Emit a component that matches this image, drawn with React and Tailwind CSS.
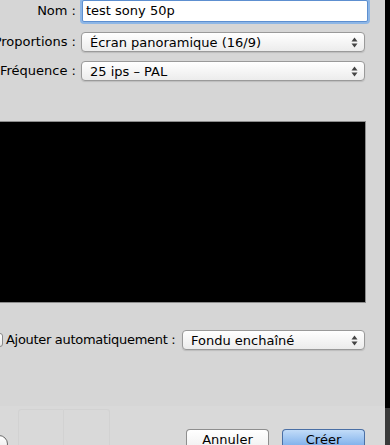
import React from "react";

const font = { fontFamily: '"DejaVu Sans", "Lucida Grande", sans-serif' };

const Arrows = () => (
  <svg width="7" height="11" viewBox="0 0 7 11" className="shrink-0">
    <path d="M3.5 0.5 L6.5 4.5 L0.5 4.5 Z" fill="#444" />
    <path d="M3.5 10.5 L6.5 6.5 L0.5 6.5 Z" fill="#444" />
  </svg>
);

const Popup = ({ value, className }) => (
  <div
    className={`flex h-[20px] shrink-0 items-center justify-between rounded-[4px] border border-[#9a9a9a] bg-gradient-to-b from-white to-[#ececec] pl-[8px] pr-[6px] text-[13px] text-black shadow-[0_1px_1px_rgba(0,0,0,0.12)] ${className}`}
  >
    <span className="leading-none">{value}</span>
    <Arrows />
  </div>
);

const Label = ({ children }) => (
  <div className="flex w-[76px] shrink-0 justify-end whitespace-nowrap text-[13px] text-black">
    {children}
  </div>
);

export default function App() {
  return (
    <div className="flex h-[445px] w-[390px] overflow-hidden bg-[#d6d6d6]" style={font}>
      {/* dialog */}
      <div className="flex w-[385px] flex-col">
        <div className="flex flex-col">
          {/* Nom */}
          <div className="-mt-[1px] flex h-[24px] items-center">
            <Label>Nom :</Label>
            <div className="ml-[6px] flex h-[22px] w-[286px] items-center rounded-[2px] border border-[#5d8fd0] bg-white pl-[3px] text-[13px] text-black shadow-[0_0_0_2px_#8db6e6]">
              test sony 50p
            </div>
          </div>

          {/* Proportions */}
          <div className="mt-[9px] flex items-center">
            <Label>Proportions :</Label>
            <Popup value="Écran panoramique (16/9)" className="ml-[5px] w-[284px]" />
          </div>

          {/* Fréquence */}
          <div className="mt-[9px] flex items-center">
            <Label>Fréquence :</Label>
            <Popup value="25 ips – PAL" className="ml-[5px] w-[284px]" />
          </div>
        </div>

        {/* aperçu */}
        <div className="mt-[40px] h-[182px] w-[366px] border-y border-r border-[#8c8c8c] bg-black" />

        {/* Ajouter automatiquement */}
        <div className="mt-[27px] flex items-center">
          <div className="-ml-[11px] h-[14px] w-[14px] shrink-0 rounded-[3px] border border-[#8a8a8a] bg-gradient-to-b from-white to-[#e6e6e6]" />
          <span className="ml-[3px] w-[173px] shrink-0 whitespace-nowrap text-[13px] tracking-[-0.3px] text-black">
            Ajouter automatiquement :
          </span>
          <Popup value="Fondu enchaîné" className="ml-[3px] w-[183px]" />
        </div>

        {/* pied */}
        <div className="mt-[56px] flex flex-1 items-end bg-[#d9d9d9]">
          <div className="-ml-[10px] mb-[-8px] h-[18px] w-[18px] shrink-0 rounded-full border border-[#6a6a6a] bg-gradient-to-b from-white to-[#e8e8e8]" />
          <div className="mb-[-6px] ml-[10px] flex">
            <div className="h-[42px] w-[46px] rounded-tl-[3px] border border-[#d2d2d2]" />
            <div className="h-[42px] w-[46px] rounded-tr-[3px] border-y border-r border-[#d2d2d2]" />
          </div>
          <div className="mb-[-4px] ml-auto mr-[20px] flex gap-[13px]">
            <div className="flex h-[20px] w-[83px] items-center justify-center rounded-t-[4px] border-x border-t border-[#8e8e8e] bg-gradient-to-b from-white to-[#f0f0f0] text-[13px] text-black">
              Annuler
            </div>
            <div className="flex h-[20px] w-[83px] items-center justify-center rounded-t-[4px] border-x border-t border-[#4a6fa5] bg-gradient-to-b from-[#c2dcf8] to-[#72a8e8] text-[13px] text-black">
              Créer
            </div>
          </div>
        </div>
      </div>

      {/* bord droit */}
      <div className="flex w-[5px] flex-col">
        <div className="h-[408px] bg-black" />
        <div className="flex-1 bg-[#3a3a3a]" />
      </div>
    </div>
  );
}
